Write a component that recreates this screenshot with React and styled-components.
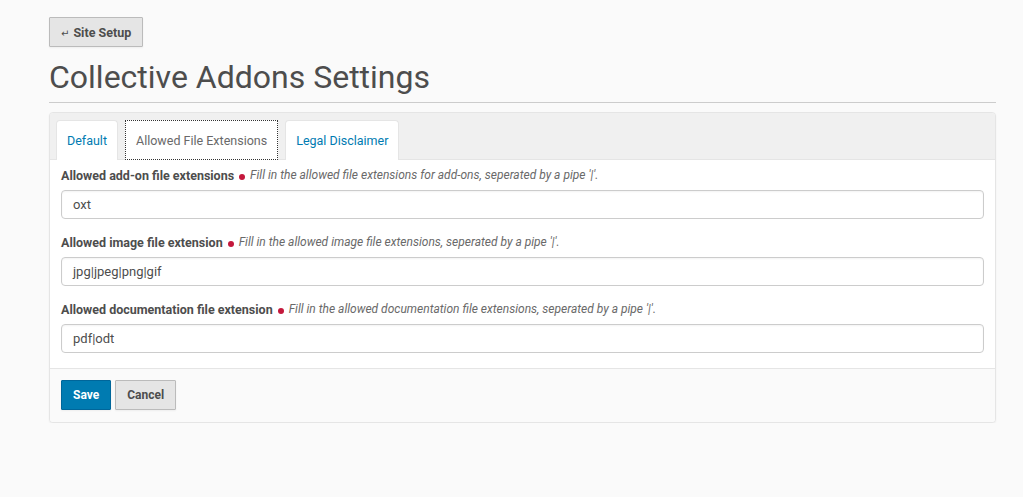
import React from 'react';
import styled, { createGlobalStyle } from 'styled-components';

const Global = createGlobalStyle`
  html, body {
    margin: 0;
    padding: 0;
    background: #fafafa;
    font-family: Roboto, "Liberation Sans", sans-serif;
    color: #4d4d4d;
  }
`;

const Page = styled.div`
  padding: 17px 27px 0 49px;
  width: 947px;
`;

const BackButton = styled.button`
  display: inline-flex;
  align-items: center;
  gap: 4px;
  height: 30px;
  padding: 0 11px;
  border: 1px solid #bbb;
  border-radius: 1px;
  background: #e5e5e5;
  color: #4d4d4d;
  font-family: inherit;
  font-size: 12.5px;
  font-weight: 700;
  box-shadow: 0 1px 2px rgba(0, 0, 0, 0.05);
`;

const Arrow = styled.span`
  font-family: "DejaVu Sans", sans-serif;
  font-size: 10px;
  font-weight: 400;
  margin-top: 2px;
`;

const Title = styled.h1`
  margin: 12px 0 0;
  font-size: 32px;
  font-weight: 400;
  line-height: 36px;
  color: #4d4d4d;
  padding-bottom: 7px;
  border-bottom: 1px solid #ccc;
`;

const Panel = styled.div`
  margin-top: 9px;
  border: 1px solid #e5e5e5;
  border-radius: 4px;
  background: #fafafa;
  box-shadow: 0 1px 2px rgba(0, 0, 0, 0.05);
  overflow: hidden;
`;

const TabBar = styled.div`
  display: flex;
  gap: 7px;
  padding: 7px 6px 0;
  background: #f0f0f0;
  border-bottom: 1px solid #e5e5e5;
`;

const Tab = styled.div`
  height: 40px;
  box-sizing: border-box;
  display: flex;
  align-items: center;
  padding: 0 10px;
  margin-bottom: -1px;
  background: #fff;
  border: 1px ${p => (p.$active ? 'dotted #333' : 'solid #e5e5e5')};
  border-bottom: ${p => (p.$active ? '1px dotted #333' : 'none')};
  border-radius: ${p => (p.$active ? '0' : '4px 4px 0 0')};
  color: ${p => (p.$active ? '#696969' : '#007bb1')};
  font-size: 12.5px;
`;

const Body = styled.div`
  background: #fff;
  padding: 7px 11px 0;
  border-bottom: 1px solid #e5e5e5;
`;

const Field = styled.div`
  padding-bottom: 15px;
`;

const Label = styled.div`
  font-size: 12px;
  line-height: 17px;
  margin-bottom: 6px;
  display: flex;
  align-items: center;
  gap: 4px;
`;

const LabelText = styled.span`
  font-size: 12.5px;
  font-weight: 700;
  color: #4d4d4d;
`;

const Required = styled.span`
  display: inline-block;
  width: 6px;
  height: 6px;
  border-radius: 50%;
  background: #c4183c;
  margin: 2px 1px 0;
`;

const Help = styled.span`
  font-style: italic;
  color: #696969;
`;

const Input = styled.div`
  height: 29px;
  box-sizing: border-box;
  border: 1px solid #ccc;
  border-radius: 4px;
  padding: 0 11px;
  display: flex;
  align-items: center;
  font-size: 13px;
  color: #4d4d4d;
  box-shadow: inset 0 1px 2px rgba(0, 0, 0, 0.05);
`;

const Footer = styled.div`
  display: flex;
  gap: 4px;
  padding: 11px 11px 12px;
  background: #fafafa;
`;

const Button = styled.button`
  height: 30px;
  padding: 0 11px;
  font-family: inherit;
  font-size: 12px;
  font-weight: 700;
  border-radius: 1px;
  border: 1px solid ${p => (p.$primary ? '#00669a' : '#bbb')};
  background: ${p => (p.$primary ? '#007bb1' : '#e5e5e5')};
  color: ${p => (p.$primary ? '#fff' : '#4d4d4d')};
  box-shadow: 0 1px 2px rgba(0, 0, 0, 0.05);
`;

const fields = [
  {
    label: 'Allowed add-on file extensions',
    help: "Fill in the allowed file extensions for add-ons, seperated by a pipe '|'.",
    value: 'oxt',
  },
  {
    label: 'Allowed image file extension',
    help: "Fill in the allowed image file extensions, seperated by a pipe '|'.",
    value: 'jpg|jpeg|png|gif',
  },
  {
    label: 'Allowed documentation file extension',
    help: "Fill in the allowed documentation file extensions, seperated by a pipe '|'.",
    value: 'pdf|odt',
  },
];

const App = () => (
  <>
    <Global />
    <Page>
      <BackButton>
        <Arrow>↵</Arrow> Site Setup
      </BackButton>
      <Title>Collective Addons Settings</Title>
      <Panel>
        <TabBar>
          <Tab>Default</Tab>
          <Tab $active>Allowed File Extensions</Tab>
          <Tab>Legal Disclaimer</Tab>
        </TabBar>
        <Body>
          {fields.map(f => (
            <Field key={f.label}>
              <Label>
                <LabelText>{f.label}</LabelText>
                <Required />
                <Help>{f.help}</Help>
              </Label>
              <Input>{f.value}</Input>
            </Field>
          ))}
        </Body>
        <Footer>
          <Button $primary>Save</Button>
          <Button>Cancel</Button>
        </Footer>
      </Panel>
    </Page>
  </>
);

export default App;
